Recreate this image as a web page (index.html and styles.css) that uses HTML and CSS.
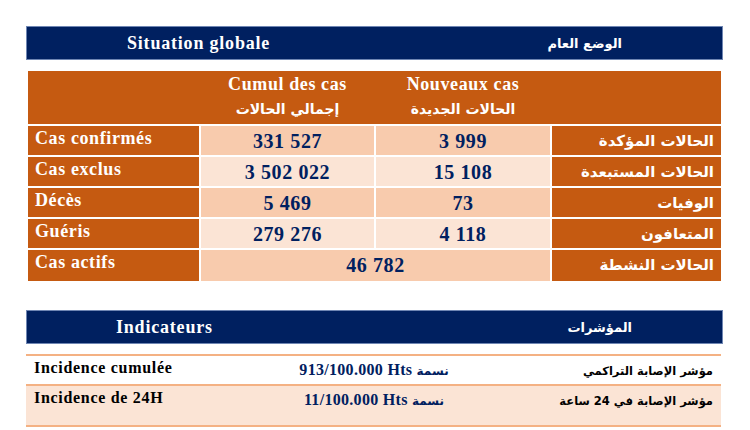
FILE: index.html
```html
<!DOCTYPE html>
<html lang="fr">
<head>
<meta charset="utf-8">
<title>Situation globale</title>
<link rel="stylesheet" href="styles.css">
</head>
<body>
<div class="page">
  <div class="bar bar-top">
    <span class="fr">Situation globale</span>
    <span class="ar" dir="rtl">الوضع العام</span>
  </div>

  <table class="sit">
    <colgroup>
      <col class="c1"><col class="c2"><col class="c3"><col class="c4">
    </colgroup>
    <thead>
      <tr>
        <th></th>
        <th><span class="hfr">Cumul des cas</span><span class="har" dir="rtl">إجمالي الحالات</span></th>
        <th><span class="hfr">Nouveaux cas</span><span class="har" dir="rtl">الحالات الجديدة</span></th>
        <th></th>
      </tr>
    </thead>
    <tbody>
      <tr class="dark">
        <td class="lab">Cas confirmés</td>
        <td class="num">331 527</td>
        <td class="num">3 999</td>
        <td class="arl" dir="rtl">الحالات المؤكدة</td>
      </tr>
      <tr class="light">
        <td class="lab">Cas exclus</td>
        <td class="num">3 502 022</td>
        <td class="num">15 108</td>
        <td class="arl" dir="rtl">الحالات المستبعدة</td>
      </tr>
      <tr class="dark">
        <td class="lab">Décès</td>
        <td class="num">5 469</td>
        <td class="num">73</td>
        <td class="arl" dir="rtl">الوفيات</td>
      </tr>
      <tr class="light">
        <td class="lab">Guéris</td>
        <td class="num">279 276</td>
        <td class="num">4 118</td>
        <td class="arl" dir="rtl">المتعافون</td>
      </tr>
      <tr class="dark">
        <td class="lab">Cas actifs</td>
        <td class="num" colspan="2">46 782</td>
        <td class="arl" dir="rtl">الحالات النشطة</td>
      </tr>
    </tbody>
  </table>

  <div class="bar bar-ind">
    <span class="fr">Indicateurs</span>
    <span class="ar" dir="rtl">المؤشرات</span>
  </div>

  <table class="ind">
    <colgroup>
      <col class="i1"><col class="i2"><col class="i3">
    </colgroup>
    <tbody>
      <tr class="r1">
        <td class="ilab">Incidence cumulée</td>
        <td class="ival">913/100.000 Hts <span class="iar">نسمة</span></td>
        <td class="iarl" dir="rtl">مؤشر الإصابة التراكمي</td>
      </tr>
      <tr class="r2">
        <td class="ilab">Incidence de 24H</td>
        <td class="ival">11/100.000 Hts <span class="iar">نسمة</span></td>
        <td class="iarl" dir="rtl">مؤشر الإصابة في 24 ساعة</td>
      </tr>
      <tr class="r3">
        <td class="ilab">Taux de létalité</td>
        <td class="ival"></td>
        <td class="iarl"></td>
      </tr>
    </tbody>
  </table>
</div>
</body>
</html>
```

FILE: styles.css
```css
html, body {
  margin: 0;
  padding: 0;
  overflow: hidden;
  background: #ffffff;
}

.page {
  width: 697px;
  padding: 26px 0 0 26px;
  font-family: "Liberation Serif", "Times New Roman", serif;
}

.bar {
  box-sizing: border-box;
  height: 34px;
  background: #002060;
  border: 1px solid #6f86b3;
  color: #ffffff;
  display: flex;
  justify-content: space-between;
  align-items: center;
  padding: 0 100px;
  line-height: 20px;
}

.bar .fr {
  font-weight: bold;
  font-size: 18px;
  letter-spacing: 0.8px;
}

.bar .ar {
  font-family: "DejaVu Sans", sans-serif;
  font-size: 13px;
  font-weight: bold;
  padding-top: 2px;
}

.bar-ind {
  margin-top: 29px;
  padding: 0 90px 0 89px;
}

/* situation table */
.sit {
  margin: 11px 0 0 2px;
  width: 693px;
  border-collapse: collapse;
  table-layout: fixed;
}

.sit .c1 { width: 172px; }
.sit .c2 { width: 175px; }
.sit .c3 { width: 176px; }
.sit .c4 { width: 170px; }

.sit thead tr { height: 54px; }

.sit th {
  background: #c55a11;
  color: #ffffff;
  padding: 0;
  vertical-align: top;
  border-bottom: 2px solid #ffffff;
  overflow: hidden;
}

.hfr {
  display: block;
  font-size: 18px;
  font-weight: bold;
  letter-spacing: 0.6px;
  margin-top: 3px;
  line-height: 20px;
}

.har {
  display: block;
  font-family: "DejaVu Sans", sans-serif;
  font-size: 14px;
  font-weight: bold;
  line-height: 18px;
  margin-top: 6px;
}

.sit tbody tr { height: 31px; }
.sit tbody tr:last-child { height: 32px; }

.sit td {
  padding: 0;
  border: 2px solid #ffffff;
  overflow: hidden;
}

.sit tr td:first-child { border-left: none; }
.sit tr td:last-child { border-right: none; }
.sit tbody tr:last-child td { border-bottom: none; }

.lab {
  background: #c55a11;
  color: #ffffff;
  font-size: 18px;
  font-weight: bold;
  letter-spacing: 0.6px;
  vertical-align: top;
  line-height: 20px;
}

.sit td.lab { padding: 2px 0 0 7px; }

.num {
  color: #002060;
  font-size: 20px;
  font-weight: bold;
  letter-spacing: 0.6px;
  text-align: center;
  vertical-align: top;
  line-height: 22px;
}

.sit td.num { padding-top: 4px; }

.dark .num { background: #f8cbad; }
.light .num { background: #fbe4d5; }

.arl {
  background: #c55a11;
  color: #ffffff;
  font-family: "DejaVu Sans", sans-serif;
  font-size: 15px;
  font-weight: bold;
  text-align: right;
  vertical-align: top;
  line-height: 18px;
}

.sit td.arl { padding: 6px 7px 0 0; }

/* indicators */
.ind {
  margin-top: 10px;
  width: 695px;
  border-collapse: collapse;
  table-layout: fixed;
}

.ind .i1 { width: 232px; }
.ind .i2 { width: 232px; }
.ind .i3 { width: 231px; }

.ind td {
  padding: 0;
  border-top: 2px solid #f4b183;
  vertical-align: top;
  overflow: hidden;
}

.ind .r1 { height: 30px; }
.ind .r2 { height: 41px; }
.ind .r3 { height: 30px; }

.ind .r1 td { background: #ffffff; }
.ind .r2 td { background: #fbe4d5; }
.ind .r3 td { background: #ffffff; }

.ilab {
  color: #000000;
  font-size: 16px;
  font-weight: bold;
  letter-spacing: 0.7px;
  line-height: 20px;
}

.ind td.ilab { padding: 2px 0 0 8px; }

.ival {
  color: #002060;
  font-size: 16px;
  font-weight: bold;
  text-align: center;
  line-height: 18px;
  letter-spacing: 0.3px;
}

.ind td.ival { padding-top: 5px; }

.iar {
  font-family: "DejaVu Sans", sans-serif;
  font-size: 12px;
  letter-spacing: 0;
}

.iarl {
  color: #000000;
  font-family: "DejaVu Sans", sans-serif;
  font-size: 11.5px;
  font-weight: bold;
  text-align: right;
  line-height: 18px;
}

.ind td.iarl { padding: 6px 8px 0 0; }
```
